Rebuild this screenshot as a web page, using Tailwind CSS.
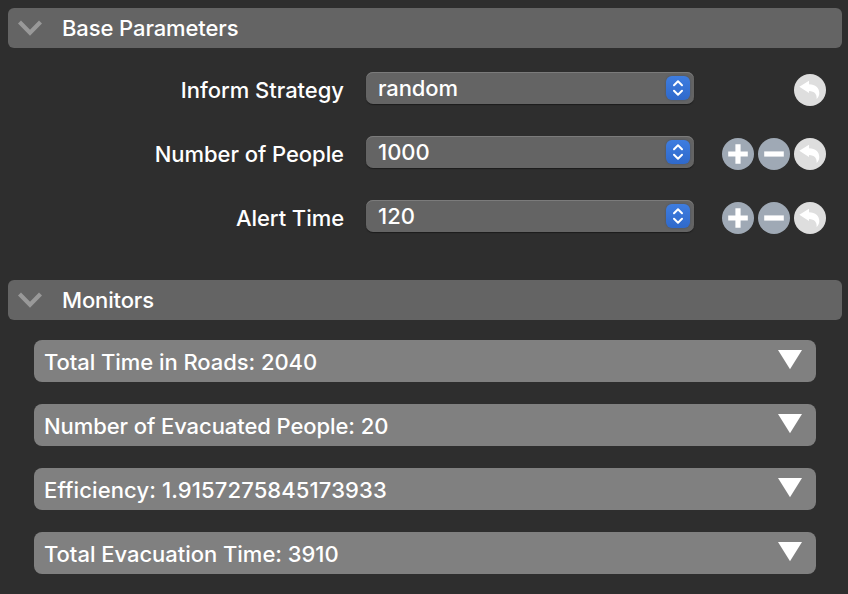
<!DOCTYPE html>
<html lang="en">
<head>
<meta charset="utf-8">
<title>Parameters</title>
<script src="https://cdn.jsdelivr.net/npm/@tailwindcss/browser@4"></script>
</head>
<body class="h-[594px] w-[848px] overflow-hidden bg-[#2e2e2e] pt-2 pr-1.5 pl-2 font-['Inter','Liberation_Sans',sans-serif] text-[22px] leading-[28px] font-medium text-white">
<svg class="hidden">
  <symbol id="chevron" viewBox="0 0 24 16"><path d="M1.500 2 12 12.700 22.500 2" fill="none" stroke="#999" stroke-width="4.2"/></symbol>
  <symbol id="updown" viewBox="0 0 24 24"><path d="M8 9.300 12 5.300l4 4M8 14.700l4 4 4-4" fill="none" stroke="#fff" stroke-width="2" stroke-linecap="round" stroke-linejoin="round"/></symbol>
  <symbol id="plus" viewBox="0 0 32 32"><circle cx="16" cy="16" r="16" fill="#9fa9b5"/><path d="M6.200 16h19.600M16 6.200v19.600" stroke="#fff" stroke-width="5.2"/></symbol>
  <symbol id="minus" viewBox="0 0 32 32"><circle cx="16" cy="16" r="16" fill="#9fa9b5"/><path d="M6.200 16h19.600" stroke="#fff" stroke-width="5.2"/></symbol>
  <symbol id="undo" viewBox="0 0 32 32"><circle cx="16" cy="16" r="16" fill="#dedede"/><path d="M5.300 12.800 15 6.700v3.600c6.500.2 10.300 3.700 10.300 8.800 0 2.400-.9 4.500-2.700 6 .5-5-2.100-8-7.600-8.200v2Z" fill="#fff"/></symbol>
  <symbol id="down" viewBox="0 0 24 20"><path d="M0 0h24L12 19.300Z" fill="#fff"/></symbol>
</svg>

<section class="h-[272px]">
  <h2 class="flex h-10 items-center rounded-[6px] bg-[#646464] pl-[10px]">
    <svg class="h-4 w-6"><use href="#chevron"/></svg>
    <span class="ml-5 tracking-[-0.1px]">Base Parameters</span>
  </h2>
  <div class="mt-[18px] flex h-12 items-center">
    <span class="w-[336px] text-right tracking-[-0.02px]">Inform Strategy</span>
    <div class="mb-1 ml-[22px] flex h-8 w-[328px] items-center justify-between rounded-[7px] bg-[#646464] pr-1 pl-3 shadow-[0_1px_1px_#1c1c1c,inset_0_1px_0_#7b7b7b]">
      <span class="tracking-[-0.1px]">random</span>
      <svg class="h-6 w-6 rounded-[6px] bg-linear-to-b from-[#3e7de0] to-[#2f69cb] shadow-[0_0_2px_#3d4e6c]"><use href="#updown"/></svg>
    </div>
    <div class="ml-7 flex w-[104px] justify-end gap-1">
      <svg class="size-8"><use href="#undo"/></svg>
    </div>
  </div>
  <div class="mt-4 flex h-12 items-center">
    <span class="w-[336px] text-right tracking-[-0.05px]">Number of People</span>
    <div class="mb-1 ml-[22px] flex h-8 w-[328px] items-center justify-between rounded-[7px] bg-[#646464] pr-1 pl-3 shadow-[0_1px_1px_#1c1c1c,inset_0_1px_0_#7b7b7b]">
      <span>1000</span>
      <svg class="h-6 w-6 rounded-[6px] bg-linear-to-b from-[#3e7de0] to-[#2f69cb] shadow-[0_0_2px_#3d4e6c]"><use href="#updown"/></svg>
    </div>
    <div class="ml-7 flex w-[104px] justify-end gap-1">
      <svg class="size-8"><use href="#plus"/></svg>
      <svg class="size-8"><use href="#minus"/></svg>
      <svg class="size-8"><use href="#undo"/></svg>
    </div>
  </div>
  <div class="mt-4 flex h-12 items-center">
    <span class="w-[336px] text-right tracking-[-0.06px]">Alert Time</span>
    <div class="mb-1 ml-[22px] flex h-8 w-[328px] items-center justify-between rounded-[7px] bg-[#646464] pr-1 pl-3 shadow-[0_1px_1px_#1c1c1c,inset_0_1px_0_#7b7b7b]">
      <span>120</span>
      <svg class="h-6 w-6 rounded-[6px] bg-linear-to-b from-[#3e7de0] to-[#2f69cb] shadow-[0_0_2px_#3d4e6c]"><use href="#updown"/></svg>
    </div>
    <div class="ml-7 flex w-[104px] justify-end gap-1">
      <svg class="size-8"><use href="#plus"/></svg>
      <svg class="size-8"><use href="#minus"/></svg>
      <svg class="size-8"><use href="#undo"/></svg>
    </div>
  </div>
</section>

<section>
  <h2 class="flex h-10 items-center rounded-[6px] bg-[#646464] pl-[10px]">
    <svg class="h-4 w-6"><use href="#chevron"/></svg>
    <span class="ml-5 tracking-[-0.15px]">Monitors</span>
  </h2>
  <div class="mt-5 mr-[26px] ml-[26px] flex flex-col gap-[22px]">
    <div class="flex h-[42px] items-center justify-between rounded-[8px] bg-[#808080] pr-[14px] pl-[10px]">
      <span class="pt-0.5 tracking-[-0.06px]">Total Time in Roads: 2040</span>
      <svg class="mb-0.5 h-5 w-6"><use href="#down"/></svg>
    </div>
    <div class="flex h-[42px] items-center justify-between rounded-[8px] bg-[#808080] pr-[14px] pl-[10px]">
      <span class="pt-0.5 tracking-[-0.08px]">Number of Evacuated People: 20</span>
      <svg class="mb-0.5 h-5 w-6"><use href="#down"/></svg>
    </div>
    <div class="flex h-[42px] items-center justify-between rounded-[8px] bg-[#808080] pr-[14px] pl-[10px]">
      <span class="pt-0.5 tracking-[0.12px]">Efficiency: 1.9157275845173933</span>
      <svg class="mb-0.5 h-5 w-6"><use href="#down"/></svg>
    </div>
    <div class="flex h-[42px] items-center justify-between rounded-[8px] bg-[#808080] pr-[14px] pl-[10px]">
      <span class="pt-0.5 tracking-[-0.03px]">Total Evacuation Time: 3910</span>
      <svg class="mb-0.5 h-5 w-6"><use href="#down"/></svg>
    </div>
  </div>
</section>
</body>
</html>
